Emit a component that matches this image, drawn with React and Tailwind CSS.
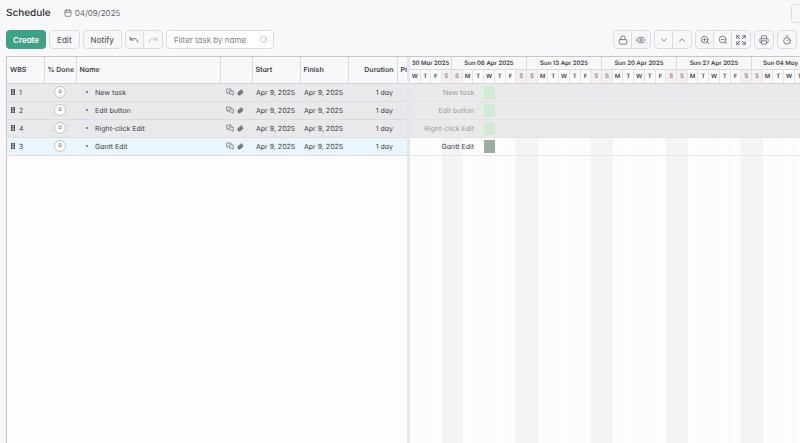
import {
  Calendar,
  Search,
  Lock,
  Eye,
  ChevronDown,
  ChevronUp,
  ZoomIn,
  ZoomOut,
  Printer,
  Timer,
} from "lucide-react";
import clsx from "clsx";

const tasks = [
  { wbs: 1, name: "New task", done: 0, start: "Apr 9, 2025", finish: "Apr 9, 2025", duration: "1 day" },
  { wbs: 2, name: "Edit button", done: 0, start: "Apr 9, 2025", finish: "Apr 9, 2025", duration: "1 day" },
  { wbs: 4, name: "Right-click Edit", done: 0, start: "Apr 9, 2025", finish: "Apr 9, 2025", duration: "1 day" },
  { wbs: 3, name: "Gantt Edit", done: 0, start: "Apr 9, 2025", finish: "Apr 9, 2025", duration: "1 day", selected: true },
];

const fullWeek = ["S", "M", "T", "W", "T", "F", "S"];

const weeks = [
  { label: "30 Mar 2025", days: ["W", "T", "F", "S"], weekend: [3] },
  { label: "Sun 06 Apr 2025", days: fullWeek, weekend: [0, 6] },
  { label: "Sun 13 Apr 2025", days: fullWeek, weekend: [0, 6] },
  { label: "Sun 20 Apr 2025", days: fullWeek, weekend: [0, 6] },
  { label: "Sun 27 Apr 2025", days: fullWeek, weekend: [0, 6] },
  { label: "Sun 04 May 2025", days: fullWeek, weekend: [0, 6] },
];

function UndoIcon({ className }) {
  return (
    <svg viewBox="0 0 24 24" fill="none" stroke="currentColor" strokeWidth="2.2" strokeLinecap="round" strokeLinejoin="round" className={className}>
      <path d="M3 5v7h7" />
      <path d="M3.5 11.5C8 6.5 19 6.500 21 17" />
    </svg>
  );
}

function FitIcon({ className }) {
  return (
    <svg viewBox="0 0 24 24" fill="none" stroke="currentColor" strokeWidth="2.4" strokeLinecap="round" strokeLinejoin="round" className={className}>
      <path d="M2 8V2h6M2 2l7 7" />
      <path d="M16 2h6v6M22 2l-7 7" />
      <path d="M2 16v6h6M2 22l7-7" />
      <path d="M16 22h6v-6M22 22l-7-7" />
    </svg>
  );
}

function CommentsIcon() {
  return (
    <svg viewBox="0 0 24 24" fill="none" stroke="currentColor" strokeWidth="2.4" strokeLinejoin="round" className="size-2">
      <path d="M15 8V3H2v10h2v4l4-4" />
      <path d="M10 9h12v9h-1v4l-5-4h-6z" />
    </svg>
  );
}

function ClipIcon() {
  return (
    <svg viewBox="0 0 24 24" fill="none" stroke="currentColor" strokeWidth="3.6" strokeLinecap="round" strokeLinejoin="round" className="size-[7px]">
      <path d="m20 11-8.500 8.500a5 5 0 0 1-7-7L13 4a3.600 3.600 0 0 1 5 5l-8.200 8.200a1.500 1.500 0 0 1-2.500-2L14 8.500" />
    </svg>
  );
}

function GripIcon() {
  return (
    <svg viewBox="0 0 4 6" fill="currentColor" className="h-[6px] w-1">
      <path d="M0 0h1.600v1.700H0zM2.400 0H4v1.700H2.400zM0 2.100h1.600v1.700H0zM2.400 2.100H4v1.700H2.400zM0 4.200h1.600v1.700H0zM2.400 4.200H4v1.700H2.400z" />
    </svg>
  );
}

function ToolGroup({ items }) {
  return (
    <div className="flex h-[19px] shrink-0 divide-x divide-[#dcdde2] rounded-[4px] border border-[#dcdde2]">
      {items.map(({ label, Icon, muted, flip }) => (
        <button
          key={label}
          type="button"
          aria-label={label}
          className={clsx("flex w-[18px] items-center justify-center", muted ? "text-[#b9bcc4]" : "text-[#666a75]")}
        >
          <Icon className={clsx("size-[10px]", flip && "-scale-x-100")} />
        </button>
      ))}
    </div>
  );
}

function Toolbar() {
  return (
    <div className="flex h-[19px] items-center gap-[3px] text-[8px] font-medium text-[#5c606b]">
      <button type="button" className="h-full rounded-[4px] bg-[#3fa288] px-[7px] font-semibold text-white">Create</button>
      <button type="button" className="h-full rounded-[4px] border border-[#dcdde2] px-[7px]">Edit</button>
      <button type="button" className="h-full rounded-[4px] border border-[#dcdde2] px-[7px]">Notify</button>
      <ToolGroup
        items={[
          { label: "Undo", Icon: UndoIcon },
          { label: "Redo", Icon: UndoIcon, muted: true, flip: true },
        ]}
      />
      <label className="flex h-full w-[108px] shrink-0 items-center rounded-[4px] border border-[#dcdde2] bg-white px-[5px]">
        <input
          type="text"
          aria-label="Filter task by name"
          placeholder="Filter task by name"
          className="w-full min-w-0 px-[2px] font-normal outline-none placeholder:text-[#7d818b]"
        />
        <Search className="size-[9px] shrink-0 text-[#b9bcc4]" />
      </label>
      <div className="-mr-[2px] ml-auto flex gap-[3px]">
        <ToolGroup items={[{ label: "Lock", Icon: Lock }, { label: "Show", Icon: Eye }]} />
        <ToolGroup items={[{ label: "Expand all", Icon: ChevronDown }, { label: "Collapse all", Icon: ChevronUp }]} />
        <ToolGroup
          items={[
            { label: "Zoom in", Icon: ZoomIn },
            { label: "Zoom out", Icon: ZoomOut },
            { label: "Fit", Icon: FitIcon },
          ]}
        />
        <ToolGroup items={[{ label: "Print", Icon: Printer }]} />
        <ToolGroup items={[{ label: "Timer", Icon: Timer }]} />
        <div className="w-[2px] rounded-l-[4px] border-l border-[#dcdde2]" />
      </div>
    </div>
  );
}

function TaskTable() {
  const th = "border-r border-[#d9dadd] px-[3px] text-left font-semibold";
  return (
    <div className="w-[400px] shrink-0 overflow-hidden">
      <table className="w-[440px] table-fixed border-collapse text-[7px] leading-[11px] text-[#3c3f49]">
        <colgroup>
          <col className="w-[37px]" />
          <col className="w-[32px]" />
          <col className="w-[144px]" />
          <col className="w-[32px]" />
          <col className="w-[48px]" />
          <col className="w-[48px]" />
          <col className="w-[49px]" />
          <col />
        </colgroup>
        <thead>
          <tr className="h-[26px] border-b border-[#d4d5d8] bg-[#f8f8fa]">
            <th className={th}>WBS</th>
            <th className={clsx(th, "whitespace-nowrap")}>% Done</th>
            <th className={th}>Name</th>
            <th className={th} aria-label="Links" />
            <th className={th}>Start</th>
            <th className={th}>Finish</th>
            <th className="border-r border-[#d9dadd] px-[3px] text-right font-semibold">Duration</th>
            <th className="px-[3px] text-left font-semibold">Pr</th>
          </tr>
        </thead>
        <tbody>
          {tasks.map((task) => (
            <tr
              key={task.wbs}
              className={clsx("h-[18px] border-b border-[#dcdde0]", task.selected ? "bg-[#e9f6fd]" : "bg-[#e9e9eb]")}
            >
              <td className="px-1">
                <div className="flex items-center gap-1">
                  <GripIcon />
                  {task.wbs}
                </div>
              </td>
              <td>
                <div className="mx-auto flex size-3 items-center justify-center rounded-full border border-[#c4c5c8] bg-white text-[5px]">
                  {task.done}
                </div>
              </td>
              <td className="px-[10px]">
                <div className="flex items-center gap-[7px]">
                  <span className="size-[2px] rounded-full bg-[#6b6053]" />
                  {task.name}
                </div>
              </td>
              <td className="px-[6px]">
                <div className="flex items-center gap-[3px] text-[#75777d]">
                  <CommentsIcon />
                  <ClipIcon />
                </div>
              </td>
              <td className="px-1 whitespace-nowrap">{task.start}</td>
              <td className="px-1 whitespace-nowrap">{task.finish}</td>
              <td className="px-1 text-right">{task.duration}</td>
              <td />
            </tr>
          ))}
        </tbody>
      </table>
    </div>
  );
}

function Week({ week }) {
  const full = week.days.length === 7;
  const cols = full ? "grid-cols-7" : "grid-cols-4";
  return (
    <div className={clsx("flex shrink-0 flex-col", full ? "w-[75px]" : "w-[42px]")}>
      <div className="flex h-[13px] items-center justify-center border-r border-b border-[#d9dadd] bg-[#f8f8fa] text-[6px] leading-[9px] font-semibold whitespace-nowrap">
        {week.label}
      </div>
      <div className={clsx("grid h-[14px] border-b border-[#d4d5d8] text-[6px] leading-[9px] font-semibold", cols)}>
        {week.days.map((day, i) => (
          <div
            key={i}
            className={clsx(
              "flex items-center justify-center border-r border-[#e3e3e6]",
              week.weekend.includes(i) ? "bg-[#f5efef] text-[#8d8585]" : "bg-[#fbfbfc]"
            )}
          >
            {day}
          </div>
        ))}
      </div>
      <div className={clsx("grid flex-1", cols)}>
        {week.days.map((_, i) => (
          <div key={i} className={week.weekend.includes(i) ? "bg-[#f4f4f5]" : "border-r border-[#f9f9fa]"} />
        ))}
      </div>
    </div>
  );
}

function Gantt() {
  return (
    <div className="relative min-w-0 flex-1 overflow-hidden bg-[#fdfdfd] text-[#3c3f49]">
      <div className="flex h-full">
        {weeks.map((week) => (
          <Week key={week.label} week={week} />
        ))}
      </div>
      {/* task bars lie over the day grid */}
      <div className="absolute inset-x-0 top-[27px] text-[7px] leading-[11px]">
        {tasks.map((task) => (
          <div
            key={task.wbs}
            className={clsx(
              "flex h-[18px] items-center gap-[10px] border-b",
              task.selected ? "border-[#e6e7ea]" : "border-[#e2e2e4] bg-[#eaeaec] text-[#9a9a9f]"
            )}
          >
            <span className="w-[64px] text-right whitespace-nowrap">{task.name}</span>
            <span className={clsx("h-[13px] w-[11px]", task.selected ? "bg-[#9bae9e]" : "bg-[#d2ecd2]")} />
          </div>
        ))}
      </div>
    </div>
  );
}

export default function App() {
  return (
    <div className="flex min-h-screen flex-col overflow-hidden bg-[#f8f8fa] pl-[6px] font-[Inter,sans-serif] [font-feature-settings:'cv11'] [text-rendering:geometricPrecision]">
      <header className="flex h-[26px] items-center gap-[13px] text-[#2b2e38]">
        <h1 className="text-[10px] font-medium">Schedule</h1>
        <div className="flex items-center gap-[3px] text-[8px] text-[#5c606b]">
          <Calendar className="size-2" />
          <time dateTime="2025-04-09">04/09/2025</time>
        </div>
        <button type="button" aria-label="More" className="ml-auto h-[19px] w-[9px] rounded-l-[4px] border border-r-0 border-[#dcdde2]" />
      </header>
      <div className="pt-1 pb-[7px]">
        <Toolbar />
      </div>
      <main className="flex flex-1 border-t border-l border-[#c6c7cb] bg-[#fdfdfd]">
        <TaskTable />
        <div className="w-[3px] shrink-0 bg-[#e3e8ee]" />
        <Gantt />
      </main>
    </div>
  );
}
